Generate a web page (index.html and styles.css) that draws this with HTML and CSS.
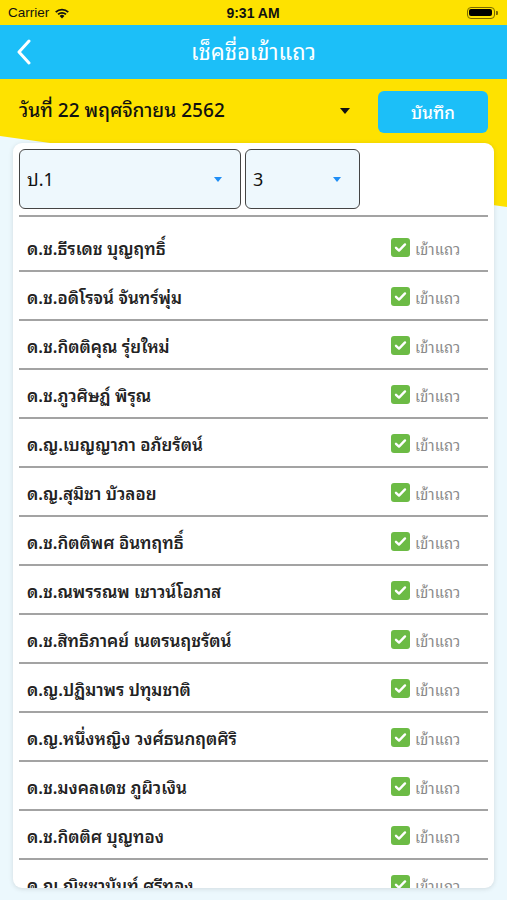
FILE: index.html
```html
<!DOCTYPE html>
<html lang="th">
<head>
<meta charset="utf-8">
<title>เช็คชื่อเข้าแถว</title>
<link rel="stylesheet" href="styles.css">
</head>
<body>
<div class="page">
  <div class="statusbar">
    <div class="carrier">Carrier
      <svg class="wifi" width="16" height="12" viewBox="0 0 16 12"><path d="M8 11.5 5.6 9a3.4 3.4 0 0 1 4.8 0Z" fill="#111"/><path d="M3.4 6.8a6.6 6.6 0 0 1 9.2 0l-1.3 1.3a4.7 4.7 0 0 0-6.6 0Z" fill="#111"/><path d="M1.1 4.5a9.9 9.9 0 0 1 13.8 0l-1.3 1.3a8 8 0 0 0-11.2 0Z" fill="#111"/></svg>
    </div>
    <div class="time">9:31 AM</div>
    <div class="battery"><span class="bat-body"><span class="bat-fill"></span></span><span class="bat-tip"></span></div>
  </div>
  <div class="navbar">
    <svg class="back" width="16" height="26" viewBox="0 0 16 26"><path d="M13 2 3 13l10 11" fill="none" stroke="#fff" stroke-width="3" stroke-linecap="round" stroke-linejoin="round"/></svg>
    <div class="title">เช็คชื่อเข้าแถว</div>
  </div>
  <div class="daterow">
    <div class="date">วันที่ 22 พฤศจิกายน 2562</div>
    <span class="caret-black"></span>
    <button class="save">บันทึก</button>
  </div>
  <div class="card">
    <div class="selects">
      <div class="select wide"><span>ป.1</span><span class="caret-blue"></span></div>
      <div class="select narrow"><span>3</span><span class="caret-blue"></span></div>
    </div>
    <div class="divider"></div>
    <ul class="list">
      <li class="row"><span class="name">ด.ช.ธีรเดช บุญฤทธิ์</span><span class="check"><span class="box"><svg width="13" height="11" viewBox="0 0 13 11"><path d="M2 5.8 5 8.6 11 2.4" fill="none" stroke="#fff" stroke-width="2.4" stroke-linecap="round" stroke-linejoin="round"/></svg></span>เข้าแถว</span></li>
      <li class="row"><span class="name">ด.ช.อดิโรจน์ จันทร์พุ่ม</span><span class="check"><span class="box"><svg width="13" height="11" viewBox="0 0 13 11"><path d="M2 5.8 5 8.6 11 2.4" fill="none" stroke="#fff" stroke-width="2.4" stroke-linecap="round" stroke-linejoin="round"/></svg></span>เข้าแถว</span></li>
      <li class="row"><span class="name">ด.ช.กิตติคุณ รุ่ยใหม่</span><span class="check"><span class="box"><svg width="13" height="11" viewBox="0 0 13 11"><path d="M2 5.8 5 8.6 11 2.4" fill="none" stroke="#fff" stroke-width="2.4" stroke-linecap="round" stroke-linejoin="round"/></svg></span>เข้าแถว</span></li>
      <li class="row"><span class="name">ด.ช.ภูวศิษฏ์ พิรุณ</span><span class="check"><span class="box"><svg width="13" height="11" viewBox="0 0 13 11"><path d="M2 5.8 5 8.6 11 2.4" fill="none" stroke="#fff" stroke-width="2.4" stroke-linecap="round" stroke-linejoin="round"/></svg></span>เข้าแถว</span></li>
      <li class="row"><span class="name">ด.ญ.เบญญาภา อภัยรัตน์</span><span class="check"><span class="box"><svg width="13" height="11" viewBox="0 0 13 11"><path d="M2 5.8 5 8.6 11 2.4" fill="none" stroke="#fff" stroke-width="2.4" stroke-linecap="round" stroke-linejoin="round"/></svg></span>เข้าแถว</span></li>
      <li class="row"><span class="name">ด.ญ.สุมิชา บัวลอย</span><span class="check"><span class="box"><svg width="13" height="11" viewBox="0 0 13 11"><path d="M2 5.8 5 8.6 11 2.4" fill="none" stroke="#fff" stroke-width="2.4" stroke-linecap="round" stroke-linejoin="round"/></svg></span>เข้าแถว</span></li>
      <li class="row"><span class="name">ด.ช.กิตติพศ อินทฤทธิ์</span><span class="check"><span class="box"><svg width="13" height="11" viewBox="0 0 13 11"><path d="M2 5.8 5 8.6 11 2.4" fill="none" stroke="#fff" stroke-width="2.4" stroke-linecap="round" stroke-linejoin="round"/></svg></span>เข้าแถว</span></li>
      <li class="row"><span class="name">ด.ช.ณพรรณพ เชาวน์โอภาส</span><span class="check"><span class="box"><svg width="13" height="11" viewBox="0 0 13 11"><path d="M2 5.8 5 8.6 11 2.4" fill="none" stroke="#fff" stroke-width="2.4" stroke-linecap="round" stroke-linejoin="round"/></svg></span>เข้าแถว</span></li>
      <li class="row"><span class="name">ด.ช.สิทธิภาคย์ เนตรนฤชรัตน์</span><span class="check"><span class="box"><svg width="13" height="11" viewBox="0 0 13 11"><path d="M2 5.8 5 8.6 11 2.4" fill="none" stroke="#fff" stroke-width="2.4" stroke-linecap="round" stroke-linejoin="round"/></svg></span>เข้าแถว</span></li>
      <li class="row"><span class="name">ด.ญ.ปฏิมาพร ปทุมชาติ</span><span class="check"><span class="box"><svg width="13" height="11" viewBox="0 0 13 11"><path d="M2 5.8 5 8.6 11 2.4" fill="none" stroke="#fff" stroke-width="2.4" stroke-linecap="round" stroke-linejoin="round"/></svg></span>เข้าแถว</span></li>
      <li class="row"><span class="name">ด.ญ.หนึ่งหญิง วงศ์ธนกฤตศิริ</span><span class="check"><span class="box"><svg width="13" height="11" viewBox="0 0 13 11"><path d="M2 5.8 5 8.6 11 2.4" fill="none" stroke="#fff" stroke-width="2.4" stroke-linecap="round" stroke-linejoin="round"/></svg></span>เข้าแถว</span></li>
      <li class="row"><span class="name">ด.ช.มงคลเดช ภูผิวเงิน</span><span class="check"><span class="box"><svg width="13" height="11" viewBox="0 0 13 11"><path d="M2 5.8 5 8.6 11 2.4" fill="none" stroke="#fff" stroke-width="2.4" stroke-linecap="round" stroke-linejoin="round"/></svg></span>เข้าแถว</span></li>
      <li class="row"><span class="name">ด.ช.กิตติศ บุญทอง</span><span class="check"><span class="box"><svg width="13" height="11" viewBox="0 0 13 11"><path d="M2 5.8 5 8.6 11 2.4" fill="none" stroke="#fff" stroke-width="2.4" stroke-linecap="round" stroke-linejoin="round"/></svg></span>เข้าแถว</span></li>
      <li class="row"><span class="name">ด.ญ.ณิชชานันท์ ศรีทอง</span><span class="check"><span class="box"><svg width="13" height="11" viewBox="0 0 13 11"><path d="M2 5.8 5 8.6 11 2.4" fill="none" stroke="#fff" stroke-width="2.4" stroke-linecap="round" stroke-linejoin="round"/></svg></span>เข้าแถว</span></li>
    </ul>
  </div>
</div>
</body>
</html>
```

FILE: styles.css
```css
* { box-sizing: border-box; }
html, body { margin: 0; padding: 0; }
body {
  width: 507px;
  height: 900px;
  overflow: hidden;
  background: #ecf8fd;
  font-family: "Noto Sans Thai Looped", "Noto Sans Thai", "Noto Sans", "Liberation Sans", sans-serif;
  color: #1a1a1a;
}
.page {
  position: relative;
  z-index: 0;
  height: 900px;
  display: flex;
  flex-direction: column;
}
.page::before {
  content: "";
  position: absolute;
  top: 0;
  left: 0;
  right: 0;
  height: 215px;
  background: #fee200;
  clip-path: polygon(0 0, 100% 0, 100% 207px, 0 136px);
  z-index: -1;
}
.statusbar {
  height: 25px;
  display: flex;
  align-items: center;
  justify-content: space-between;
  padding: 0 9px 0 8px;
  font-family: "Liberation Sans", Arial, sans-serif;
  color: #111;
}
.carrier {
  font-size: 13.5px;
  display: flex;
  align-items: center;
  gap: 5px;
  width: 120px;
}
.time {
  font-weight: 700;
  font-size: 14px;
}
.battery {
  width: 120px;
  display: flex;
  justify-content: flex-end;
  align-items: center;
}
.bat-body {
  width: 28px;
  height: 12px;
  border: 1px solid #7a6a00;
  border-radius: 4px;
  padding: 1.5px;
  display: flex;
}
.bat-fill {
  flex: 1;
  background: #000;
  border-radius: 2px;
}
.bat-tip {
  width: 2px;
  height: 4px;
  background: #7a6a00;
  border-radius: 0 1px 1px 0;
  margin-left: 1px;
}
.navbar {
  height: 54px;
  background: #1cbff8;
  display: flex;
  align-items: center;
  justify-content: center;
  position: relative;
}
.back {
  position: absolute;
  left: 16px;
  top: 14px;
}
.title {
  color: #fff;
  font-size: 22px;
  font-weight: 400;
  padding-bottom: 4px;
}
.daterow {
  height: 64px;
  display: flex;
  align-items: center;
  padding: 0 19px 0 19px;
}
.date {
  flex: 1;
  font-size: 19px;
  font-weight: 500;
  color: #111;
  padding-bottom: 6px;
}
.caret-black {
  width: 0;
  height: 0;
  border-left: 5px solid transparent;
  border-right: 5px solid transparent;
  border-top: 6px solid #111;
  margin-right: 28px;
}
.save {
  width: 110px;
  height: 42px;
  border: none;
  border-radius: 6px;
  background: #1cbff8;
  color: #fff;
  font-family: inherit;
  font-size: 17px;
  font-weight: 500;
  margin-top: 1px;
}
.card {
  margin: 0 13px;
  height: 745px;
  background: #fff;
  border-radius: 9px;
  box-shadow: 0 1px 5px rgba(0, 0, 0, 0.12);
  padding: 6px 6px 0;
  overflow: hidden;
}
.selects {
  display: flex;
  gap: 4px;
}
.select {
  height: 60px;
  background: #eef8fd;
  border: 1.5px solid #444;
  border-radius: 6px;
  display: flex;
  align-items: center;
  justify-content: space-between;
  padding: 0 18px 3px 7px;
  font-size: 18px;
  color: #111;
}
.wide { width: 222px; }
.narrow { width: 115px; }
.caret-blue {
  width: 0;
  height: 0;
  border-left: 4px solid transparent;
  border-right: 4px solid transparent;
  border-top: 5px solid #1f8ef5;
  margin-top: 3px;
}
.divider {
  height: 2px;
  background: #a3a3a3;
  margin-top: 6px;
}
.list {
  list-style: none;
  margin: 0;
  padding: 6px 0 0;
}
.row {
  height: 49px;
  border-bottom: 2px solid #a3a3a3;
  display: flex;
  align-items: center;
  justify-content: space-between;
  padding: 2px 0 0 8px;
}
.name {
  font-size: 17px;
  font-weight: 600;
  color: #222;
}
.check {
  display: flex;
  align-items: center;
  gap: 5px;
  width: 97px;
  font-size: 15px;
  color: #8a8a8a;
}
.box {
  width: 19px;
  height: 19px;
  border-radius: 3px;
  background: #6cbb45;
  display: flex;
  align-items: center;
  justify-content: center;
}
```
